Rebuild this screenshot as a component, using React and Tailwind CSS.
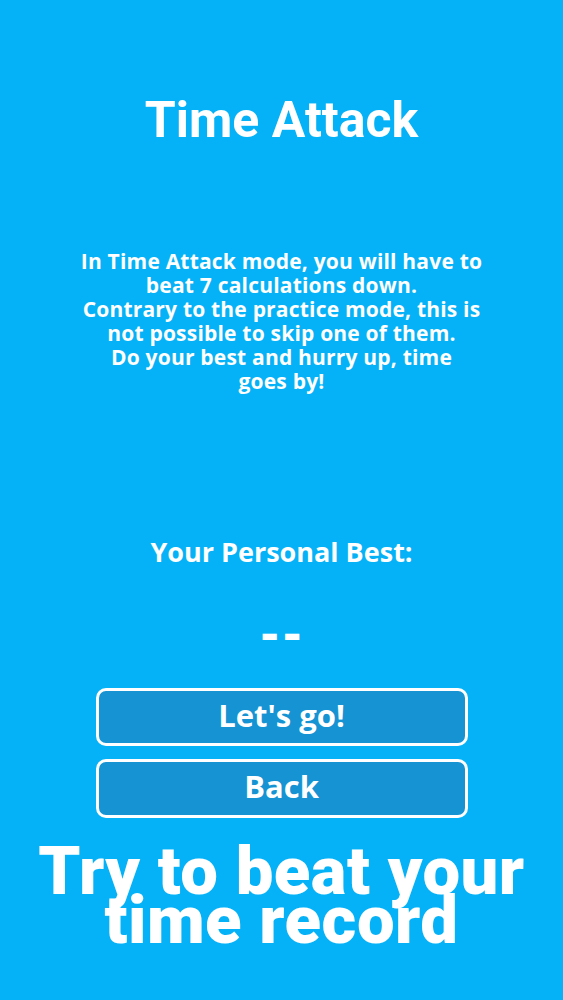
export default function App() {
  const open = { fontFamily: "'Open Sans', Roboto, sans-serif" };
  return (
    <div
      className="w-full h-[1000px] bg-[#05b2f7] flex flex-col items-center text-white overflow-hidden"
      style={{ fontFamily: "Roboto, 'Open Sans', sans-serif" }}
    >
      <h1 className="mt-[90px] text-[50px] leading-[60px] font-bold">Time Attack</h1>
      <p className="mt-[99px] text-[21px] leading-[24px] font-bold text-center tracking-[0.2px]" style={open}>
        In Time Attack mode, you will have to
        <br />
        beat 7 calculations down.
        <br />
        Contrary to the practice mode, this is
        <br />
        not possible to skip one of them.
        <br />
        Do your best and hurry up, time
        <br />
        goes by!
      </p>
      <div className="mt-[144px] text-[27px] leading-[30px] font-bold" style={open}>
        Your Personal Best:
      </div>
      <div className="mt-[45px] text-[48px] leading-[48px] font-black tracking-[1px]">--</div>
      <div className="mt-[28px] flex flex-col gap-[13px]" style={open}>
        <button className="w-[372px] h-[58px] border-[3px] border-white rounded-[10px] bg-[#1593d3] text-[31px] leading-[36px] pb-[5px] font-bold flex items-center justify-center">
          Let's go!
        </button>
        <button className="w-[372px] h-[59px] border-[3px] border-white rounded-[10px] bg-[#1593d3] text-[31px] leading-[36px] pb-[5px] font-bold flex items-center justify-center">
          Back
        </button>
      </div>
      <div className="mt-[29px] text-[67px] leading-[49px] font-black text-center tracking-[0.5px]">
        Try to beat your
        <br />
        time record
      </div>
    </div>
  );
}
